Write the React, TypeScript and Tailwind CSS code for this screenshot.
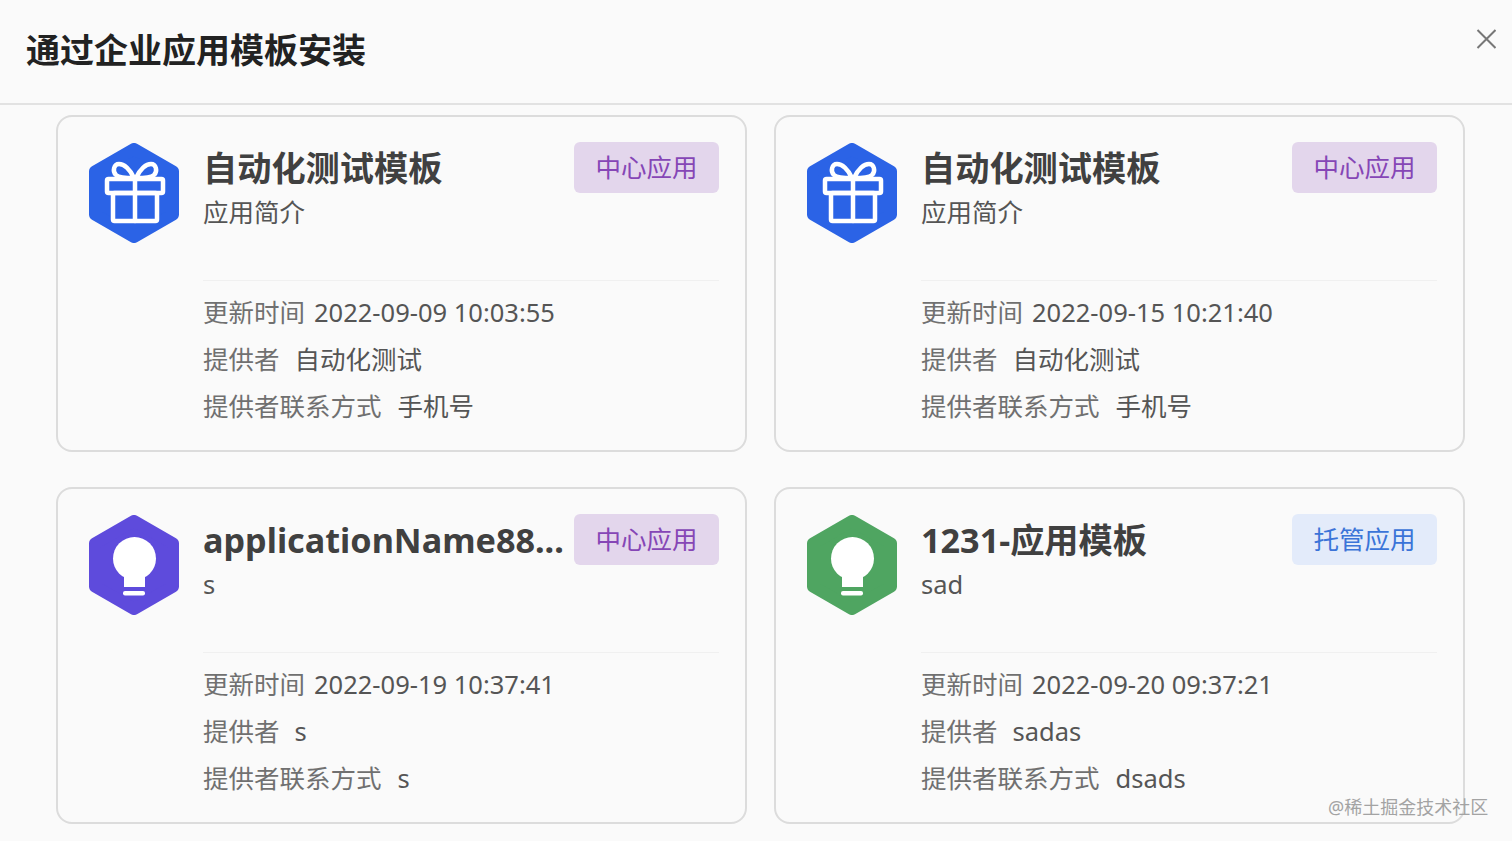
const FONT = "font-['Noto_Sans','Noto_Sans_CJK_SC',sans-serif]";

type Template = {
  name: string;
  desc: string;
  updated: string;
  provider: string;
  contact: string;
  tag: 'center' | 'hosted';
  icon: 'gift' | 'bulbPurple' | 'bulbGreen';
};

const templates: Template[] = [
  { name: '自动化测试模板', desc: '应用简介', updated: '2022-09-09 10:03:55', provider: '自动化测试', contact: '手机号', tag: 'center', icon: 'gift' },
  { name: '自动化测试模板', desc: '应用简介', updated: '2022-09-15 10:21:40', provider: '自动化测试', contact: '手机号', tag: 'center', icon: 'gift' },
  { name: 'applicationName88...', desc: 's', updated: '2022-09-19 10:37:41', provider: 's', contact: 's', tag: 'center', icon: 'bulbPurple' },
  { name: '1231-应用模板', desc: 'sad', updated: '2022-09-20 09:37:21', provider: 'sadas', contact: 'dsads', tag: 'hosted', icon: 'bulbGreen' },
];

function HexIcon({ icon }: { icon: Template['icon'] }) {
  const fill = icon === 'gift' ? '#2b63e6' : icon === 'bulbPurple' ? '#5e4bdc' : '#4fa561';
  return (
    <svg viewBox="0 0 90 100" className="h-[100px] w-[90px] shrink-0">
      <polygon points="45,6 84,28.5 84,71.5 45,94 6,71.5 6,28.5" fill={fill} stroke={fill} strokeWidth="12" strokeLinejoin="round" />
      {icon === 'gift' ? (
        <g fill="none" stroke="#fff" strokeWidth="4.5" strokeLinejoin="round" strokeLinecap="round">
          <rect x="18" y="36" width="56" height="14" rx="1.5" />
          <rect x="24" y="50" width="44" height="28" rx="1.5" />
          <path d="M46 36V78" />
          <path d="M45 35C41 26 35 21 30 21C25 21 23 28 27 32C30 35 38 35 45 35Z" />
          <path d="M47 35C51 26 57 21 62 21C67 21 69 28 65 32C62 35 54 35 47 35Z" />
        </g>
      ) : (
        <g fill="#fff">
          <circle cx="45.5" cy="43.5" r="21.5" />
          <path d="M35 56H56V72H35Z" />
          <rect x="34" y="76" width="22" height="4.5" rx="2" />
        </g>
      )}
    </svg>
  );
}

function Card({ t }: { t: Template }) {
  const isHosted = t.tag === 'hosted';
  return (
    <div className="flex h-[337px] gap-6 rounded-2xl border-2 border-[#dcdcdc] pl-[31px] pr-[26px] pt-[26px]">
      <HexIcon icon={t.icon} />
      <div className="min-w-0 flex-1">
        <div className="flex h-[138px] items-start justify-between border-b border-[#f0f0f0]">
          <div className="min-w-0">
            <div className="mt-[2px] whitespace-nowrap text-[34.2px] leading-[46px] font-bold text-[#404040]">{t.name}</div>
            <div className="-mt-px text-[25.5px] leading-[44px] text-[#555]">{t.desc}</div>
          </div>
          <span className={`-mt-px flex h-[51px] w-[145px] shrink-0 items-center justify-center rounded-md text-[25.5px] ${isHosted ? 'bg-[#e3ebfa] text-[#3b74d8]' : 'bg-[#e3d6ec] text-[#8646b6]'}`}>
            {isHosted ? '托管应用' : '中心应用'}
          </span>
        </div>
        <div className="mt-[8px] text-[25.5px] leading-[47px] text-[#555]">
          <div className="flex gap-[9px]"><span className="text-[#707070]">更新时间</span><span>{t.updated}</span></div>
          <div className="flex gap-[15px]"><span className="text-[#707070]">提供者</span><span>{t.provider}</span></div>
          <div className="flex gap-[16px]"><span className="text-[#707070]">提供者联系方式</span><span>{t.contact}</span></div>
        </div>
      </div>
    </div>
  );
}

export default function App() {
  return (
    <div className={`relative h-[841px] w-[1512px] overflow-hidden bg-[#fafafa] ${FONT}`}>
      <header className="flex h-[105px] items-start justify-between border-b-2 border-[#e2e2e2] pl-[26px] pr-[16px]">
        <h1 className="mt-[27px] text-[34px] leading-[46px] font-semibold text-[#222]">通过企业应用模板安装</h1>
        <svg viewBox="0 0 20 20" className="mt-[29px] h-5 w-5" fill="none" stroke="#777" strokeWidth="2">
          <path d="M1.5 1L19.5 19M19.5 1L1.5 19" />
        </svg>
      </header>
      <main className="grid grid-cols-2 gap-x-[27px] gap-y-[35px] pl-[56px] pr-[47px] pt-[10px]">
        {templates.map((t, i) => (
          <Card key={i} t={t} />
        ))}
      </main>
      <span className="absolute left-[1328px] top-[794px] text-[18px] leading-[26px] whitespace-nowrap text-[#a3a3a3]">@稀土掘金技术社区</span>
    </div>
  );
}
